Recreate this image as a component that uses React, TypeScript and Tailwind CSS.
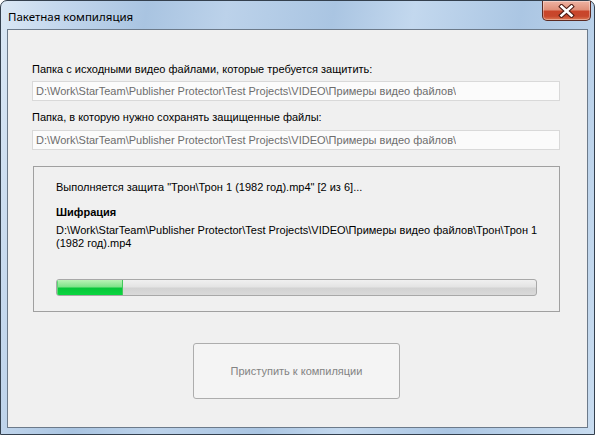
import React from 'react';

const BODY_FONT = { fontFamily: '"Liberation Sans", Arial, sans-serif' };

const SOURCE_PATH = 'D:\\Work\\StarTeam\\Publisher Protector\\Test Projects\\VIDEO\\Примеры видео файлов\\';
const CURRENT_FILE =
  'D:\\Work\\StarTeam\\Publisher Protector\\Test Projects\\VIDEO\\Примеры видео файлов\\Трон\\Трон 1 (1982 год).mp4';

function CloseButton() {
  return (
    <button
      type="button"
      aria-label="Закрыть"
      className="flex h-[20px] w-[49px] items-center justify-center rounded-b-[5px] border border-t-0 border-[#5b2a22] bg-[linear-gradient(to_bottom,#eeb3a3_0%,#e0907a_45%,#c9452a_55%,#c7472c_80%,#dd7a55_100%)] shadow-[inset_0_0_0_1px_rgba(255,255,255,0.35)]"
    >
      <svg width="17" height="14" viewBox="0 0 17 14">
        <path d="M3.5 2.5 L13.5 11.5 M13.5 2.5 L3.5 11.5" stroke="#4a1a12" strokeWidth="4.6" strokeLinecap="square" />
        <path d="M3.5 2.5 L13.5 11.5 M13.5 2.5 L3.5 11.5" stroke="#ffffff" strokeWidth="2.6" strokeLinecap="square" />
      </svg>
    </button>
  );
}

function PathField({ value }: { value: string }) {
  return (
    <div className="flex h-[20px] w-[528px] items-center border border-[#d9d9d9] bg-[#fbfbfb] px-[3px] text-[11px] text-[#6d6d6d]">
      <span className="truncate">{value}</span>
    </div>
  );
}

function ProgressBar({ percent }: { percent: number }) {
  return (
    <div className="relative h-[17px] w-[481px] overflow-hidden rounded-[3px] border border-[#a8a8a8] bg-[linear-gradient(to_bottom,#f0f0f0_0%,#e4e4e4_45%,#d2d2d2_55%,#dadada_100%)]">
      <div
        className="h-full bg-[linear-gradient(to_bottom,#b9f3b6_0%,#7fe38a_45%,#08c63a_55%,#0ad640_100%)] shadow-[inset_1px_0_0_#5dd874,inset_-1px_0_0_#43c95c]"
        style={{ width: `${percent}%` }}
      />
    </div>
  );
}

export default function App() {
  return (
    <div
      className="flex h-[435px] w-[595px] flex-col rounded-t-[7px] border border-[#34404e] bg-[linear-gradient(100deg,#dbe8f5_0%,#c6d9ee_8%,#a9c4e1_22%,#bcd2ea_34%,#aac5e2_50%,#c3d8ee_62%,#abc6e3_78%,#c8dcf0_100%)] px-[6px] pb-[6px]"
      style={BODY_FONT}
    >
      {/* Заголовок окна */}
      <div className="flex h-[28px] shrink-0 items-start justify-between">
        <span className="pt-[7px] pl-[1px] text-[11.5px] text-black" style={{ fontFamily: '"Noto Sans", "Open Sans", sans-serif' }}>
          Пакетная компиляция
        </span>
        <div className="mr-[-3px]">
          <CloseButton />
        </div>
      </div>

      {/* Клиентская область */}
      <div className="flex flex-1 flex-col border border-[#6c7a8a] bg-[#f0f0f0] pl-[24px] pt-[33px] text-[11px] text-black">
        <div className="leading-[13px]">Папка с исходными видео файлами, которые требуется защитить:</div>
        <div className="mt-[5px]">
          <PathField value={SOURCE_PATH} />
        </div>
        <div className="mt-[10px] leading-[13px]">Папка, в которую нужно сохранять защищенные файлы:</div>
        <div className="mt-[6px]">
          <PathField value={SOURCE_PATH} />
        </div>

        <div className="ml-[1px] mt-[16px] flex h-[146px] w-[527px] flex-col border border-[#a0a0a0] pl-[22px] pr-[18px] pt-[14px] leading-[13px]">
          <div>Выполняется защита "Трон\Трон 1 (1982 год).mp4" [2 из 6]...</div>
          <div className="mt-[12px] font-bold">Шифрация</div>
          <div className="mt-[5px] break-words">{CURRENT_FILE}</div>
          <div className="mt-[29px]">
            <ProgressBar percent={13.7} />
          </div>
        </div>

        <div className="ml-[161px] mt-[31px]">
          <button
            type="button"
            disabled
            className="flex h-[56px] w-[207px] items-center justify-center rounded-[3px] border border-[#adadad] bg-[#f4f4f4] text-[11px] text-[#838383]"
          >
            Приступить к компиляции
          </button>
        </div>
      </div>
    </div>
  );
}
